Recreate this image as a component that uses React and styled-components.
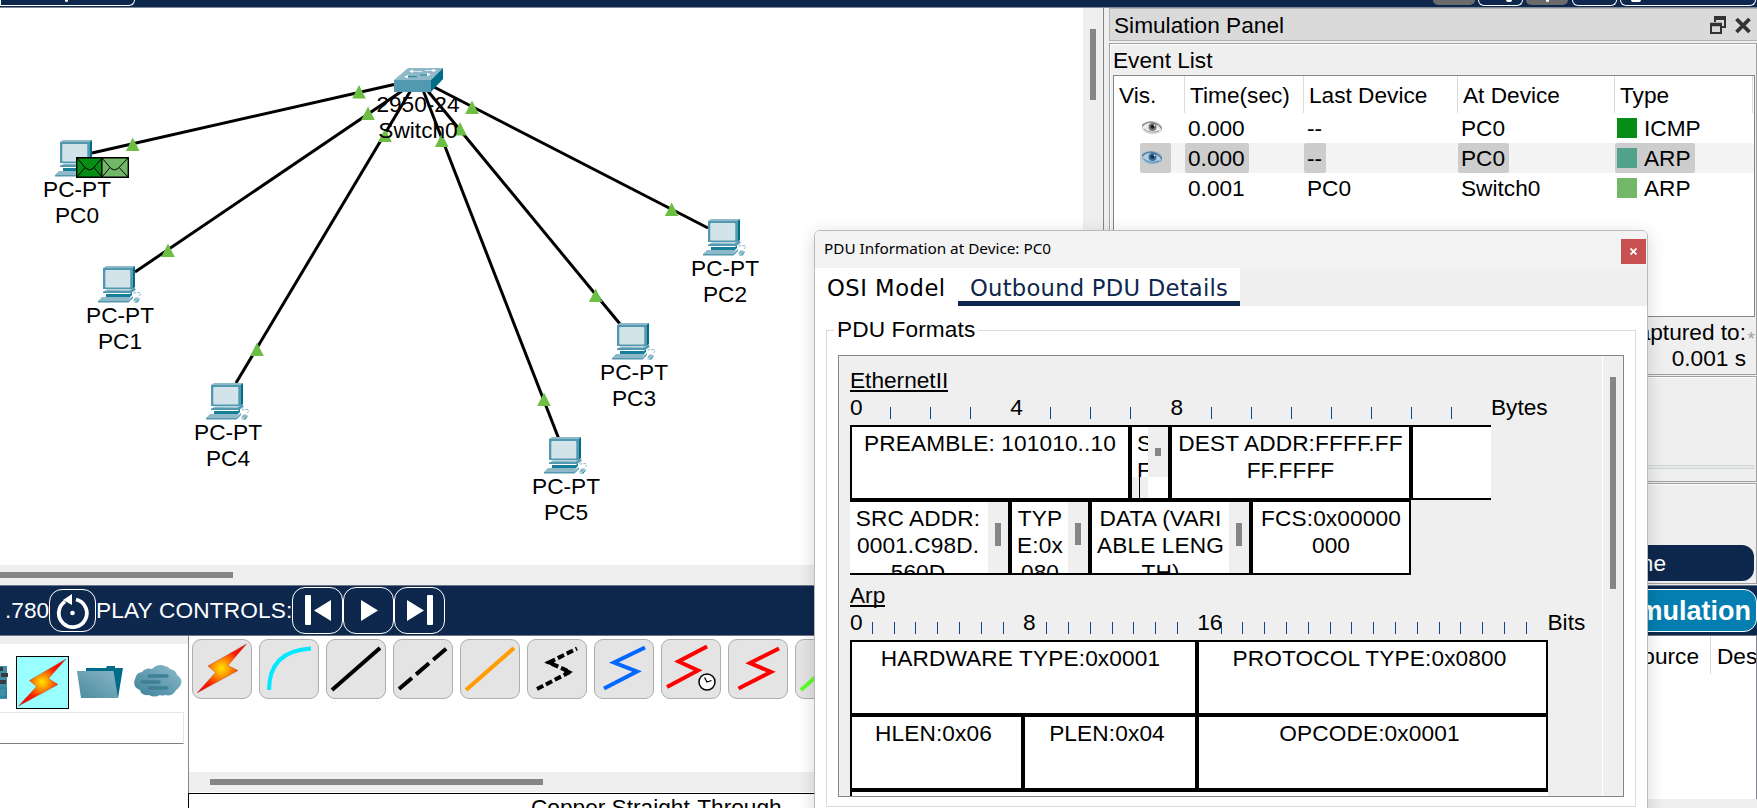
import React from "react";
import styled, { createGlobalStyle, css } from "styled-components";

const NAVY = "#0e274c";
const GREY = "#efefef";
const LINE = "#858590";

const Global = createGlobalStyle`
  * { box-sizing: border-box; }
  body {
    margin: 0;
    overflow: hidden;
    background: #fff;
    color: #000;
    font-family: "Liberation Sans", Arial, sans-serif;
    font-size: 22.67px;
    line-height: 26px;
    white-space: nowrap;
  }
`;

const Screen = styled.div`
  position: relative;
  display: flex;
  flex-direction: column;
  width: 1757px;
  height: 808px;
  overflow: hidden;
  background: #fff;
`;

/* ---------- top tool strip ---------- */

const TopBar = styled.header`
  display: flex;
  flex: none;
  height: 8px;
  padding-right: 1px;
  background: ${NAVY};
  border-bottom: 1px solid #7f8896;
`;

const TopTab = styled.div`
  width: ${(p) => p.$w}px;
  height: ${(p) => (p.$filled ? 5 : 6)}px;
  margin-left: ${(p) => p.$gap || 0}px;
  border: ${(p) => (p.$filled ? "none" : "1px solid #fff")};
  border-top: none;
  border-radius: ${(p) => (p.$left ? "0 0 8px 0" : "0 0 11px 11px")};
  background: ${(p) => (p.$filled ? "#6b6b6b" : "transparent")};
  display: flex;
  justify-content: ${(p) => p.$align || "center"};
  padding: ${(p) => (p.$left ? "0 66px 0 0" : "0 10px")};
`;

const TabSpeck = styled.i`
  width: ${(p) => p.$w}px;
  height: 2px;
  background: #fff;
  border-radius: 0 0 3px 3px;
`;

const Spacer = styled.div`
  flex: 1;
`;

/* ---------- workspace ---------- */

const Middle = styled.main`
  display: flex;
  flex: none;
  height: 577px;
`;

const Workspace = styled.section`
  display: grid;
  grid-template: 557px 20px / 1083px 20px;
  width: 1104px;
  border-right: 1px solid ${LINE};
  background: ${GREY};
`;

const Canvas = styled.div`
  position: relative;
  background: #fff;
  overflow: hidden;
`;

const Wires = styled.svg`
  position: absolute;
  inset: 0;
`;

const Device = styled.div`
  position: absolute;
  left: ${(p) => p.$x}px;
  top: ${(p) => p.$y}px;
  width: 90px;
  display: flex;
  flex-direction: column;
  align-items: center;
  text-align: center;
  svg { display: block; margin-bottom: -1px; flex: none; }
  span { padding-right: 1px; }
`;

const Packets = styled.svg`
  position: absolute;
  left: 76px;
  top: 149px;
`;

const VTrack = styled.div`
  padding: ${(p) => p.$top}px 7px 0;
`;

const HTrack = styled.div`
  padding: 7px 0 0 ${(p) => p.$left || 0}px;
  background: ${GREY};
  height: 20px;
  flex: none;
`;

const Thumb = styled.div`
  width: ${(p) => p.$w || 6}px;
  height: ${(p) => p.$h || 6}px;
  background: #858585;
`;

/* ---------- simulation panel ---------- */

const SimPanel = styled.aside`
  display: flex;
  flex-direction: column;
  flex: 1;
  padding: 0 0 0 5px;
  background: ${GREY};
`;

const PanelTitle = styled.div`
  display: flex;
  flex: none;
  align-items: center;
  justify-content: space-between;
  height: 33px;
  padding: 0 6px 0 4px;
  margin-bottom: 2px;
  background: #dadada;
  border: solid #b4b4b4;
  border-width: 1px 0 1px 1px;
`;

const TitleIcons = styled.div`
  display: flex;
  gap: 9px;
`;

const Group = styled.div`
  height: ${(p) => p.$h}px;
  margin-bottom: 1px;
  padding: ${(p) => p.$pad || "0"};
  border: 1px solid #a0a0a0;
  box-shadow: inset 1px 1px #fff;
  background: ${GREY};
  flex: none;
`;

const EventTable = styled.div`
  width: 642px;
  height: 242px;
  margin-top: 2px;
  border: 1px solid ${LINE};
  background: #fff;
`;

const eventColumns = css`
  display: grid;
  grid-template-columns: 71px 119px 154px 157px 138px;
`;

const HeadRow = styled.div`
  ${eventColumns}
  height: 37px;
`;

const HeadCell = styled.div`
  padding: 6px 0 0 5px;
  border-right: 1px solid #dcdcdc;
`;

const EventRow = styled.div`
  ${eventColumns}
  height: 30px;
  background: ${(p) => (p.$on ? "linear-gradient(90deg,#fff 26px,#f4f4f4 26px)" : "#fff")};
`;

const EventCell = styled.div`
  display: flex;
  align-items: center;
  ${(p) => p.$eye && "padding-left: 26px;"}
`;

const Chip = styled.span`
  display: flex;
  align-items: center;
  gap: 7px;
  height: 30px;
  padding: 0 4px 1px ${(p) => (p.$type ? 2 : 3)}px;
  ${(p) => p.$eye && "width: 31px; padding: 0 0 0 2px;"}
  border-radius: 2px;
  background: ${(p) => (p.$on ? "#cdcdcd" : "transparent")};
`;

const Swatch = styled.i`
  width: 20px;
  height: 20px;
  background: ${(p) => p.$c};
`;

const Captured = styled.div`
  display: flex;
  justify-content: flex-end;
  padding: 2px 1px 0 0;
  text-align: right;
`;

const Star = styled.span`
  padding: 10px 0 0 1px;
  width: 9px;
  font-size: 19px;
  line-height: 20px;
  color: #a0a0a8;
`;

const Slider = styled.div`
  height: 4px;
  margin: 88px 2px 0;
  border: 1px solid #d0d6d6;
  background: #e6eaea;
`;

const FilterButton = styled.div`
  height: 36px;
  margin: 61px 2px 0 380px;
  padding: 5px 88px 0 0;
  border-radius: 12px;
  background: ${NAVY};
  color: #fff;
  text-align: right;
`;

/* ---------- play bar ---------- */

const PlayBar = styled.nav`
  display: flex;
  align-items: center;
  flex: none;
  height: 51px;
  padding-left: 5px;
  background: ${NAVY};
  border: solid #6c7583;
  border-width: 1px 0;
  color: #fff;
`;

const PlayText = styled.span`
  width: ${(p) => p.$w}px;
  letter-spacing: ${(p) => p.$ls || 0}px;
  margin-top: -1px;
`;

const RoundButton = styled.div`
  display: flex;
  align-items: center;
  justify-content: center;
  width: ${(p) => p.$w}px;
  height: ${(p) => p.$h}px;
  margin-top: ${(p) => p.$up || 0}px;
  border: 1px solid #fff;
  border-radius: 13px;
`;

const SimulationButton = styled.div`
  width: 190px;
  height: 43px;
  padding: 8px 5px 0 0;
  border: 1px solid #fff;
  border-radius: 13px;
  background: #047eb0;
  font-size: 27px;
  font-weight: 700;
  text-align: right;
`;

/* ---------- bottom ---------- */

const Bottom = styled.footer`
  display: flex;
  flex: 1;
  min-height: 0;
`;

const Categories = styled.div`
  width: 188px;
  flex: none;
  border-top: 8px solid ${GREY};
`;

const CategoryRow = styled.div`
  display: flex;
  height: 68px;
  padding-top: 12px;
`;

const Selected = styled.div`
  width: 53px;
  height: 53px;
  margin: 0 8px 0 8px;
  border: 1px solid #000;
  background: #9ff;
`;

const Folder = styled.svg`
  margin: 9px 10px 0 0;
`;

const PlainIcon = styled.svg`
  margin-top: ${(p) => p.$t}px;
`;

const Combo = styled.div`
  width: 184px;
  height: 32px;
  border: 1px solid #e6e6e6;
  border-left: none;
  border-bottom-color: #808080;
`;

const Connections = styled.div`
  display: flex;
  flex-direction: column;
  width: 1270px;
  border-left: 1px solid ${LINE};
  flex: none;
`;

const Palette = styled.div`
  display: flex;
  flex: none;
  gap: 7px;
  height: 136px;
  padding: 3px 0 0 3px;
  overflow: hidden;
`;

const Tool = styled.div`
  width: 60px;
  height: 60px;
  flex: none;
  border: 1.5px solid #adadad;
  border-radius: 9px;
  background: #e4e4e4;
  svg { display: block; margin: -1px; }
`;

const Caption = styled.div`
  height: 15px;
  padding: 0 0 0 342px;
  border-left: 1px solid #000;
  border-top: 1px solid #000;
  margin: 1px 0 0 -1px;
  overflow: hidden;
`;

const BottomTable = styled.div`
  flex: 1;
  display: flex;
  justify-content: flex-end;
  height: 163px;
  border-right: 1px solid ${LINE};
  box-shadow: 0 20px ${GREY};
`;

const BottomHead = styled.div`
  height: 38px;
  width: ${(p) => p.$w}px;
  padding: ${(p) => p.$pad};
  text-align: ${(p) => p.$align || "left"};
  border-right: ${(p) => (p.$last ? "none" : "1px solid #dcdcdc")};
  overflow: hidden;
`;

/* ---------- PDU dialog ---------- */

const Dialog = styled.div`
  position: absolute;
  left: 814px;
  top: 230px;
  width: 834px;
  height: 600px;
  border: 1px solid #bbb;
  border-radius: 6px 6px 0 0;
  background: #fff;
  box-shadow: 0 4px 18px rgba(0, 0, 0, 0.16);
  overflow: hidden;
`;

const DialogTitle = styled.div`
  display: flex;
  justify-content: space-between;
  height: 37px;
  padding: 4px 1px 0 9px;
  background: #f3f3f3;
  font: 15.3px/27px "Noto Sans", "Open Sans", sans-serif;
`;

const Close = styled.div`
  display: flex;
  align-items: center;
  justify-content: center;
  width: 25px;
  height: 25px;
  margin-top: 4px;
  background: #c75050;
`;

const TabBar = styled.div`
  display: flex;
  height: 38px;
  background: ${GREY};
  font-family: "DejaVu Sans", Verdana, sans-serif;
`;

const Tab = styled.div`
  width: ${(p) => p.$w}px;
  padding: 7px 0 0 12px;
  letter-spacing: ${(p) => p.$ls}px;
  color: ${(p) => (p.$on ? NAVY : "#000")};
  background: #fff;
  border-bottom: ${(p) => (p.$on ? `5px solid ${NAVY}` : "none")};
`;

const Formats = styled.fieldset`
  width: 810px;
  height: 490px;
  margin: 11px 0 0 11px;
  padding: 12px 11px 0;
  border: 1px solid #dcdcdc;
  legend {
    height: 26px;
    margin-left: -4px;
    padding: 0 3px;
    line-height: 24px;
    letter-spacing: 0.1px;
  }
`;

const ScrollArea = styled.div`
  display: flex;
  height: 442px;
  border: 1px solid ${LINE};
  background: ${GREY};
  overflow: hidden;
`;

const Frames = styled.div`
  width: 764px;
  padding: 11px 0 0 11px;
  border-right: 1px solid #fff;
  line-height: 27px;
`;

const Proto = styled.div`
  height: 27px;
  margin-top: ${(p) => p.$mt || 0}px;
  span {
    display: inline-block;
    height: 25px;
    border-bottom: 2px solid #000;
  }
`;

const Ruler = styled.div`
  display: flex;
  height: 31px;
`;

const Unit = styled.div`
  width: ${(p) => p.$w}px;
  flex: none;
  text-indent: ${(p) => p.$shift || 0}px;
`;

const Tick = styled.i`
  display: block;
  width: 1px;
  height: 12px;
  margin-top: 13px;
  background: #0a4a90;
`;

const Fields = styled.div`
  display: flex;
  height: ${(p) => p.$h || 75}px;
`;

const Field = styled.div`
  display: flex;
  width: ${(p) => p.$w}px;
  flex: none;
  border: solid #000;
  border-width: ${(p) => p.$b || "2px"};
  background: #fff;
  text-align: center;
  overflow: hidden;
`;

const FieldText = styled.div`
  flex: 1;
  min-width: 0;
  padding: 3px ${(p) => p.$pr || 0}px 0 0;
  letter-spacing: 0.12px;
  overflow: hidden;
`;

const MiniTrack = styled.div`
  width: 20px;
  height: ${(p) => p.$h || 71}px;
  padding: 21px 7px 0;
  background: ${GREY};
`;

const NarrowText = styled.div`
  width: 16px;
  height: 71px;
  padding: 3px 0 0 5px;
  overflow: hidden;
  text-align: left;
  background: linear-gradient(#fff 50px, ${GREY} 50px);
`;

const NarrowClip = styled.div`
  height: 47px;
  overflow: hidden;
`;

const NarrowLine = styled.div`
  width: 1px;
  height: 24px;
  margin-left: 2px;
  background: #000;
`;

/* ---------- icons ---------- */

const PcIcon = () => (
  <svg width="45" height="37" viewBox="0 0 45 37">
    <path d="M5 2 8 0H37L34.500 2Z" fill="#8fb9c8" />
    <path d="M5 2H34.500V23H5Z" fill="#5299b0" />
    <path d="M34.500 2 37 0V21L34.500 23Z" fill="#006d88" />
    <rect x="7.300" y="4" width="25" height="17.500" rx="1" fill="#d3e3ea" />
    <path d="M10 24H32L37 21.500V24L33 27H5V25.500Z" fill="#5299b0" />
    <path d="M6 24.500 9 23.200H34L31 25Z" fill="#a5c8d4" />
    <path d="M8 28H32L34 26V29L32 31H8Z" fill="#16809a" />
    <path d="M4 31H33L30 35H0Z" fill="#8fb9c8" />
    <path d="M0 35H30L35 30V32L30.500 36.500H0Z" fill="#5299b0" />
    <path d="M37 23C39 23 34 27 36 27L42 26.500Q44 29 40 30" fill="none" stroke="#8fb9c8" strokeWidth="1" strokeDasharray="3 1" />
    <path d="M37 31.500H41L39 35.500H35Z" fill="#8fb9c8" />
    <path d="M39 35.500 41.500 32V33.500L39.500 36.500H35.500Z" fill="#16809a" />
  </svg>
);

const SwitchIcon = () => (
  <svg width="49" height="24" viewBox="0 0 49 24">
    <path d="M0 12 14 0H49L37 12Z" fill="#8fb9c8" />
    <rect y="12" width="37" height="12" fill="#5299b0" />
    <path d="M37 12 49 0V11L37 24Z" fill="#006d88" />
    <path d="M18 3.500H28M31 2.500H40" stroke="#d8e8ee" strokeWidth="1" />
    <path d="M12 8.700H23M26 7H35" stroke="#16809a" strokeWidth="1" />
    <path d="M15 3.200 19 1.500V5ZM42.500 2.500 38.500 .7V4.300ZM10 8.700 14 7.200V10.300ZM37 6.500 33 4.800V8.300Z" fill="#fff" />
  </svg>
);

const EyeIcon = ({ blue }) => (
  <svg width="20" height="14" viewBox="0 0 20 14">
    <path d="M0 3Q4 0 10 0T20 5V10Q13 14 8 13T0 8Z" fill={blue ? "#8fb4cf" : "#d6d6d6"} />
    <path d="M1 6Q5 1 11 2T19 8Q14 12 8 11T1 6Z" fill={blue ? "#b4cfe2" : "#ececec"} />
    <path d="M0 5Q5 0 11 1.500T20 8" fill="none" stroke={blue ? "#50779a" : "#8a8a8a"} strokeWidth="1.300" />
    <path d="M2 8Q8 13 17 10" fill="none" stroke={blue ? "#5d8db5" : "#a5a5a5"} strokeWidth="1" />
    <circle cx="10.500" cy="6" r="4" fill={blue ? "#3b6f9c" : "#777"} />
    <circle cx="10.500" cy="5.800" r="2" fill={blue ? "#15304a" : "#1c1c1c"} />
    <circle cx="12.500" cy="4.500" r=".8" fill="#fff" />
  </svg>
);

const Bolt = ({ size, d, id }) => (
  <svg width={size} height={size} viewBox={`0 0 ${size} ${size}`}>
    <defs>
      <radialGradient id={id} gradientUnits="userSpaceOnUse" cx={size * 0.49} cy={size * 0.49} r={size * 0.5}>
        <stop offset="0" stopColor="#ffe600" />
        <stop offset=".3" stopColor="#ff8c00" />
        <stop offset=".65" stopColor="#ff1e00" />
        <stop offset="1" stopColor="#ff0000" />
      </radialGradient>
    </defs>
    <path d={d} fill={`url(#${id})`} stroke="#8a4a30" strokeWidth=".4" />
  </svg>
);

const Stroke = ({ d, c, w = 4, dash, children }) => (
  <svg width="60" height="60" viewBox="0 0 60 60">
    <path d={d} fill="none" stroke={c} strokeWidth={w} strokeDasharray={dash} strokeMiterlimit="10" />
    {children}
  </svg>
);

/* ---------- data ---------- */

const pcs = [
  { name: "PC0", x: 55, y: 140 },
  { name: "PC1", x: 98, y: 266 },
  { name: "PC2", x: 703, y: 219 },
  { name: "PC3", x: 612, y: 323 },
  { name: "PC4", x: 206, y: 383 },
  { name: "PC5", x: 544, y: 437 },
];

const wires = [
  [92, 153, 394, 84.5],
  [135, 272, 402, 91],
  [236, 383, 411, 90],
  [558.5, 438, 423, 90],
  [620, 324, 427, 90],
  [708, 228, 434, 87],
];

const lights = [
  [359, 85], [132.7, 137.5], [368, 106.5], [168, 243.5], [385, 128.5], [257, 342.5],
  [441.7, 133.5], [544, 392.5], [460, 122], [595.7, 288.5], [472, 100.5], [671.7, 202.5],
];

const events = [
  { time: "0.000", last: "--", at: "PC0", type: "ICMP", color: "#078d16", eye: true },
  { time: "0.000", last: "--", at: "PC0", type: "ARP", color: "#50a38a", eye: true, on: true },
  { time: "0.001", last: "PC0", at: "Switch0", type: "ARP", color: "#73b868" },
];

const ZIG = "M10 49.500 43 32.500 20 23.500 51 8.500";

const Scale = ({ unit, count, labels, suffix, shift }) => (
  <Ruler>
    {Array.from({ length: count }, (_, i) => (
      <Unit key={i} $w={unit} $shift={i ? shift : 0}>
        {labels[i] !== undefined ? labels[i] : <Tick />}
      </Unit>
    ))}
    <span>{suffix}</span>
  </Ruler>
);

export default function App() {
  return (
    <>
      <Global />
      <Screen>
        <TopBar>
          <TopTab $w={135} $left $align="flex-end"><TabSpeck $w={3} /></TopTab>
          <Spacer />
          <TopTab $w={42} $filled />
          <TopTab $w={45} $gap={3} $align="flex-end"><TabSpeck $w={6} /></TopTab>
          <TopTab $w={42} $gap={3} $filled><TabSpeck $w={3} /></TopTab>
          <TopTab $w={45} $gap={4} />
          <TopTab $w={136} $gap={3} $align="flex-start"><TabSpeck $w={10} /></TopTab>
        </TopBar>

        <Middle>
          <Workspace>
            <Canvas>
              <Wires width="1083" height="557" viewBox="0 8 1083 557">
                {wires.map(([a, b, c, d], i) => (
                  <line key={i} x1={a} y1={b} x2={c} y2={d} stroke="#000" strokeWidth="3" />
                ))}
                {lights.map(([x, y], i) => (
                  <path key={i} d={`M${x} ${y}l6.800 13.500h-13.600z`} fill="#6cbe45" />
                ))}
              </Wires>
              {pcs.map((p) => (
                <Device key={p.name} $x={p.x - 22.5} $y={p.y - 8}>
                  <PcIcon />
                  <span>PC-PT</span>
                  <span>{p.name}</span>
                </Device>
              ))}
              <Device $x={373.5} $y={60}>
                <SwitchIcon />
                <span>2950-24</span>
                <span>Switch0</span>
              </Device>
              <Packets width="53" height="21" viewBox="0 0 53 21">
                <rect x=".7" y=".7" width="25.500" height="19.600" fill="#078d16" />
                <rect x="26" y=".7" width="26.300" height="19.600" fill="#73b868" />
                <path d="M1 1 10 11.500Q13.500 14.500 17 11.500L26 1M1 20 9 10.500M26 20 18 10.500M26 1 35 11.500Q38.500 14.500 42 11.500L52 1M26 20 34 10.500M52 20 43 10.500" fill="none" stroke="#000" strokeWidth="1" />
                <path d="M.7.7H52.300V20.300H.7ZM25.800 1V20" fill="none" stroke="#000" strokeWidth="1.400" />
              </Packets>
            </Canvas>
            <VTrack $top={21}><Thumb $h={71} /></VTrack>
            <HTrack><Thumb $w={233} /></HTrack>
          </Workspace>

          <SimPanel>
            <PanelTitle>
              <span>Simulation Panel</span>
              <TitleIcons>
                <svg width="16" height="18" viewBox="0 0 16 18">
                  <path d="M5 6V1H15V11H11" fill="none" stroke="#333" strokeWidth="2" />
                  <path d="M4 2H16" stroke="#333" strokeWidth="4" />
                  <rect x="1" y="8" width="10" height="9" fill="#dadada" stroke="#333" strokeWidth="2" />
                  <path d="M0 8.500H12" stroke="#333" strokeWidth="3.500" />
                </svg>
                <svg width="16" height="18" viewBox="0 0 16 18">
                  <path d="M1.500 3 14.500 16M14.500 3 1.500 16" stroke="#333" strokeWidth="3.800" />
                </svg>
              </TitleIcons>
            </PanelTitle>
            <Group $h={332} $pad="3px 0 0 3px">
              <div>Event List</div>
              <EventTable>
                <HeadRow>
                  {["Vis.", "Time(sec)", "Last Device", "At Device", "Type"].map((h) => (
                    <HeadCell key={h}>{h}</HeadCell>
                  ))}
                </HeadRow>
                {events.map((e, i) => (
                  <EventRow key={i} $on={e.on}>
                    <EventCell $eye>{e.eye && <Chip $eye $on={e.on}><EyeIcon blue={e.on} /></Chip>}</EventCell>
                    <EventCell><Chip $on={e.on}>{e.time}</Chip></EventCell>
                    <EventCell><Chip $on={e.on}>{e.last}</Chip></EventCell>
                    <EventCell><Chip $on={e.on}>{e.at}</Chip></EventCell>
                    <EventCell><Chip $type $on={e.on}><Swatch $c={e.color} />{e.type}</Chip></EventCell>
                  </EventRow>
                ))}
              </EventTable>
              <Captured>
                <div>Captured to:<br />0.001 s</div>
                <Star>*</Star>
              </Captured>
            </Group>
            <Group $h={106}><Slider /></Group>
            <Group $h={101}><FilterButton>Show All/None</FilterButton></Group>
          </SimPanel>
        </Middle>

        <PlayBar>
          <PlayText $w={44}>.780</PlayText>
          <RoundButton $w={47} $h={43}>
            <svg width="34" height="38" viewBox="0 0 34 38">
              <path d="M20 7.500A14 14 0 1 1 9 9.500" fill="none" stroke="#fff" strokeWidth="3.800" />
              <path d="M7 8 16 2V13Z" fill="#fff" />
              <circle cx="16.500" cy="21" r="2.300" fill="#fff" />
            </svg>
          </RoundButton>
          <PlayText $w={196} $ls={0.15}>PLAY CONTROLS:</PlayText>
          <RoundButton $w={51} $h={47} $up={-1}>
            <svg width="28" height="32" viewBox="0 0 28 32">
              <rect x="1" y="1" width="6" height="30" rx="1" fill="#fff" />
              <path d="M27 6V27L10 16.500Z" fill="#fff" />
            </svg>
          </RoundButton>
          <RoundButton $w={51} $h={47} $up={-1}>
            <svg width="18" height="32" viewBox="0 0 18 32"><path d="M1 6V27L18 16.500Z" fill="#fff" /></svg>
          </RoundButton>
          <RoundButton $w={51} $h={47} $up={-1}>
            <svg width="28" height="32" viewBox="0 0 28 32">
              <rect x="21" y="1" width="6" height="30" rx="1" fill="#fff" />
              <path d="M1 6V27L18 16.500Z" fill="#fff" />
            </svg>
          </RoundButton>
          <Spacer />
          <SimulationButton>Simulation</SimulationButton>
        </PlayBar>

        <Bottom>
          <Categories>
            <CategoryRow>
              <PlainIcon $t={10} width="8" height="34" viewBox="0 0 8 34">
                <rect width="7" height="33" fill="#3f8ea6" />
                <path d="M0 1H3V5H0ZM1 7H8V11H1ZM0 14H6V18H0Z" fill="#333b40" />
                <path d="M0 22H6V31H0" fill="none" stroke="#16809a" />
              </PlainIcon>
              <Selected>
                <Bolt size={51} id="boltA" d="M49 2 31.500 21.500 41 27.500 1.500 49 19.500 29.500 12.500 23.500Z" />
              </Selected>
              <Folder width="47" height="34" viewBox="0 0 47 34">
                <defs>
                  <linearGradient id="folder" x1="0" y1="1" x2="1" y2="0">
                    <stop offset="0" stopColor="#4c8ba0" />
                    <stop offset="1" stopColor="#87b5c4" />
                  </linearGradient>
                </defs>
                <path d="M9 3H29L30 1H38V3H46L41 33H36V8H9Z" fill="#006d88" />
                <path d="M0 6H36.500L41 33H4Z" fill="url(#folder)" />
              </Folder>
              <PlainIcon $t={9} width="48" height="33" viewBox="0 0 48 33">
                <defs>
                  <linearGradient id="cloud" x1="0" y1="1" x2="1" y2="0">
                    <stop offset="0" stopColor="#3c8199" />
                    <stop offset="1" stopColor="#8dbccb" />
                  </linearGradient>
                </defs>
                <path d="M8 7Q12 2 18 4Q24-2 31 1Q35 2 36 4Q42 5 43 10Q50 15 46 21Q44 24 42 25Q39 32 31 30Q28 31 26 30Q20 33 15 30Q7 31 6 25Q-2 22 1 14Q2 8 8 7Z" fill="url(#cloud)" />
                <path d="M15 11H33M8 17H25M15 23H33" stroke="#3f8096" strokeWidth="3.500" strokeLinecap="round" />
              </PlainIcon>
            </CategoryRow>
            <Combo />
          </Categories>

          <Connections>
            <Palette>
              <Tool><Bolt size={60} id="boltB" d="M54.500 5 36 26.500 46 31.500 5 54 23.500 33.500 16 27Z" /></Tool>
              <Tool><Stroke c="#00eaff" d="M10 51Q10 12 52 9.500" /></Tool>
              <Tool><Stroke c="#000" d="M6 51 54 9" /></Tool>
              <Tool><Stroke c="#000" d="M6 50 54 9" dash="17 5.500" /></Tool>
              <Tool><Stroke c="#ff9d00" d="M6 51 54 9" /></Tool>
              <Tool>
                <Stroke c="#000" d="M10 50 43 33 22 23.500 50 9.500" dash="7 3">
                  <path d="M17.500 23.500 27 19.500V27.500ZM46 33 37 28.500V37Z" fill="#000" />
                </Stroke>
              </Tool>
              <Tool><Stroke c="#0068ff" d={ZIG} /></Tool>
              <Tool>
                <Stroke c="#f00" d="M6 48 37 31.500 17.500 22.500 46 7.500">
                  <circle cx="46" cy="43" r="8" fill="#fff" stroke="#000" strokeWidth="1.500" />
                  <path d="M43.500 38.500 46 43 50.500 41.500" fill="none" stroke="#000" strokeWidth="1.300" />
                </Stroke>
              </Tool>
              <Tool><Stroke c="#f00" d="M10.500 49.500 43 33 22 24 51 9.500" /></Tool>
              <Tool><Stroke c="#5dff2e" d="M6 51 54 9" /></Tool>
            </Palette>
            <HTrack $left={21}><Thumb $w={333} /></HTrack>
            <Caption>Copper Straight-Through</Caption>
          </Connections>

          <BottomTable>
            <BottomHead $w={100} $pad="7px 11px 0 0" $align="right">Source</BottomHead>
            <BottomHead $w={45} $pad="7px 0 0 6px" $last>Destination</BottomHead>
          </BottomTable>
        </Bottom>

        <Dialog>
          <DialogTitle>
            <span>PDU Information at Device: PC0</span>
            <Close>
              <svg width="7" height="7" viewBox="0 0 7 7"><path d="M.5.5 6.500 6.500M6.500.5.5 6.500" stroke="#fff" strokeWidth="1.800" /></svg>
            </Close>
          </DialogTitle>
          <TabBar>
            <Tab $w={143} $ls={0.5}>OSI Model</Tab>
            <Tab $w={282} $ls={0.25} $on>Outbound PDU Details</Tab>
          </TabBar>
          <Formats>
            <legend>PDU Formats</legend>
            <ScrollArea>
              <Frames>
                <Proto><span>EthernetII</span></Proto>
                <Scale unit={40.07} count={16} labels={{ 0: "0", 4: "4", 8: "8" }} suffix="Bytes" />
                <Fields>
                  <Field $w={280}><FieldText>PREAMBLE: 101010..10</FieldText></Field>
                  <Field $w={40}>
                    <NarrowText>
                      <NarrowClip>S<br />F</NarrowClip>
                      <NarrowLine />
                    </NarrowText>
                    <MiniTrack $h={50}><Thumb $h={8} /></MiniTrack>
                  </Field>
                  <Field $w={241}><FieldText>DEST ADDR:FFFF.FF<br />FF.FFFF</FieldText></Field>
                  <Field $w={80} $b="2px 0 2px 2px" />
                </Fields>
                <Fields>
                  <Field $w={160} $b="2px 2px 2px 0"><FieldText $pr={2}>SRC ADDR:<br />0001.C98D.<br />560D</FieldText><MiniTrack><Thumb $h={23} /></MiniTrack></Field>
                  <Field $w={80}><FieldText>TYP<br />E:0x<br />080</FieldText><MiniTrack><Thumb $h={22} /></MiniTrack></Field>
                  <Field $w={161}><FieldText>DATA (VARI<br />ABLE LENG<br />TH)</FieldText><MiniTrack><Thumb $h={23} /></MiniTrack></Field>
                  <Field $w={160}><FieldText>FCS:0x00000<br />000</FieldText></Field>
                </Fields>
                <Proto $mt={7}><span>Arp</span></Proto>
                <Scale unit={21.81} count={32} shift={-1.5} labels={{ 0: "0", 8: "8", 16: "16" }} suffix="Bits" />
                <Fields>
                  <Field $w={347}><FieldText $pr={6}>HARDWARE TYPE:0x0001</FieldText></Field>
                  <Field $w={351}><FieldText $pr={6}>PROTOCOL TYPE:0x0800</FieldText></Field>
                </Fields>
                <Fields>
                  <Field $w={173}><FieldText $pr={6}>HLEN:0x06</FieldText></Field>
                  <Field $w={174}><FieldText $pr={6}>PLEN:0x04</FieldText></Field>
                  <Field $w={351}><FieldText $pr={6}>OPCODE:0x0001</FieldText></Field>
                </Fields>
                <Fields $h={20}>
                  <Field $w={698} $b="2px 0 0 2px" />
                </Fields>
              </Frames>
              <VTrack $top={21}><Thumb $h={212} /></VTrack>
            </ScrollArea>
          </Formats>
        </Dialog>
      </Screen>
    </>
  );
}
